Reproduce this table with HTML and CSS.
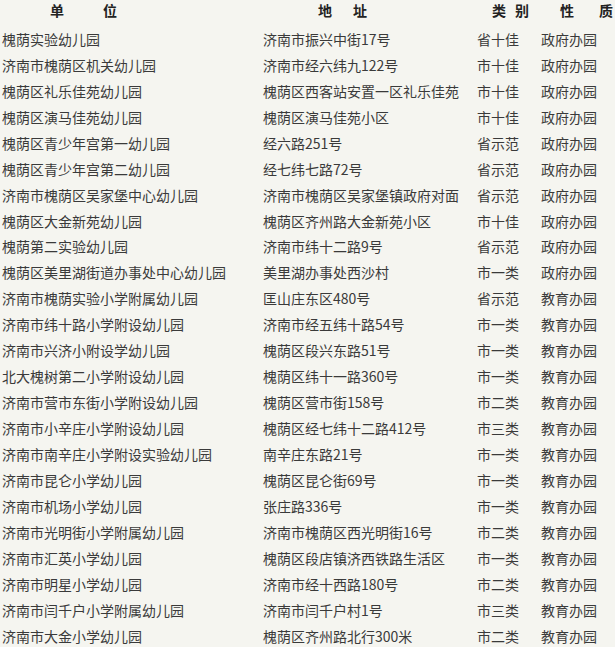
FILE: index.html
```html
<!DOCTYPE html>
<html lang="zh">
<head>
<meta charset="utf-8">
<link rel="stylesheet" href="styles.css">
</head>
<body>
<div class="table">
  <div class="row head">
    <div class="c1"><span class="h h1a">单</span><span class="h h1b">位</span></div>
    <div class="c2"><span class="h h2a">地</span><span class="h h2b">址</span></div>
    <div class="c3"><span class="h h3a">类</span><span class="h h3b">别</span></div>
    <div class="c4"><span class="h h4a">性</span><span class="h h4b">质</span></div>
  </div>
  <div class="row"><div class="c1">槐荫实验幼儿园</div><div class="c2">济南市振兴中街17号</div><div class="c3">省十佳</div><div class="c4">政府办园</div></div>
  <div class="row"><div class="c1">济南市槐荫区机关幼儿园</div><div class="c2">济南市经六纬九122号</div><div class="c3">市十佳</div><div class="c4">政府办园</div></div>
  <div class="row"><div class="c1">槐荫区礼乐佳苑幼儿园</div><div class="c2">槐荫区西客站安置一区礼乐佳苑</div><div class="c3">市十佳</div><div class="c4">政府办园</div></div>
  <div class="row"><div class="c1">槐荫区演马佳苑幼儿园</div><div class="c2">槐荫区演马佳苑小区</div><div class="c3">市十佳</div><div class="c4">政府办园</div></div>
  <div class="row"><div class="c1">槐荫区青少年宫第一幼儿园</div><div class="c2">经六路251号</div><div class="c3">省示范</div><div class="c4">政府办园</div></div>
  <div class="row"><div class="c1">槐荫区青少年宫第二幼儿园</div><div class="c2">经七纬七路72号</div><div class="c3">省示范</div><div class="c4">政府办园</div></div>
  <div class="row"><div class="c1">济南市槐荫区吴家堡中心幼儿园</div><div class="c2">济南市槐荫区吴家堡镇政府对面</div><div class="c3">省示范</div><div class="c4">政府办园</div></div>
  <div class="row"><div class="c1">槐荫区大金新苑幼儿园</div><div class="c2">槐荫区齐州路大金新苑小区</div><div class="c3">市十佳</div><div class="c4">政府办园</div></div>
  <div class="row"><div class="c1">槐荫第二实验幼儿园</div><div class="c2">济南市纬十二路9号</div><div class="c3">省示范</div><div class="c4">政府办园</div></div>
  <div class="row"><div class="c1">槐荫区美里湖街道办事处中心幼儿园</div><div class="c2">美里湖办事处西沙村</div><div class="c3">市一类</div><div class="c4">政府办园</div></div>
  <div class="row"><div class="c1">济南市槐荫实验小学附属幼儿园</div><div class="c2">匡山庄东区480号</div><div class="c3">省示范</div><div class="c4">教育办园</div></div>
  <div class="row"><div class="c1">济南市纬十路小学附设幼儿园</div><div class="c2">济南市经五纬十路54号</div><div class="c3">市一类</div><div class="c4">教育办园</div></div>
  <div class="row"><div class="c1">济南市兴济小附设学幼儿园</div><div class="c2">槐荫区段兴东路51号</div><div class="c3">市一类</div><div class="c4">教育办园</div></div>
  <div class="row"><div class="c1">北大槐树第二小学附设幼儿园</div><div class="c2">槐荫区纬十一路360号</div><div class="c3">市一类</div><div class="c4">教育办园</div></div>
  <div class="row"><div class="c1">济南市营市东街小学附设幼儿园</div><div class="c2">槐荫区营市街158号</div><div class="c3">市二类</div><div class="c4">教育办园</div></div>
  <div class="row"><div class="c1">济南市小辛庄小学附设幼儿园</div><div class="c2">槐荫区经七纬十二路412号</div><div class="c3">市三类</div><div class="c4">教育办园</div></div>
  <div class="row"><div class="c1">济南市南辛庄小学附设实验幼儿园</div><div class="c2">南辛庄东路21号</div><div class="c3">市一类</div><div class="c4">教育办园</div></div>
  <div class="row"><div class="c1">济南市昆仑小学幼儿园</div><div class="c2">槐荫区昆仑街69号</div><div class="c3">市一类</div><div class="c4">教育办园</div></div>
  <div class="row"><div class="c1">济南市机场小学幼儿园</div><div class="c2">张庄路336号</div><div class="c3">市一类</div><div class="c4">教育办园</div></div>
  <div class="row"><div class="c1">济南市光明街小学附属幼儿园</div><div class="c2">济南市槐荫区西光明街16号</div><div class="c3">市二类</div><div class="c4">教育办园</div></div>
  <div class="row"><div class="c1">济南市汇英小学幼儿园</div><div class="c2">槐荫区段店镇济西铁路生活区</div><div class="c3">市一类</div><div class="c4">教育办园</div></div>
  <div class="row"><div class="c1">济南市明星小学幼儿园</div><div class="c2">济南市经十西路180号</div><div class="c3">市二类</div><div class="c4">教育办园</div></div>
  <div class="row"><div class="c1">济南市闫千户小学附属幼儿园</div><div class="c2">济南市闫千户村1号</div><div class="c3">市三类</div><div class="c4">教育办园</div></div>
  <div class="row"><div class="c1">济南市大金小学幼儿园</div><div class="c2">槐荫区齐州路北行300米</div><div class="c3">市二类</div><div class="c4">教育办园</div></div>
</div>
</body>
</html>
```
FILE: styles.css
```css
html, body {
  margin: 0;
  padding: 0;
  background: #f5f5f0;
}
body {
  font-family: "Noto Sans CJK SC", "Liberation Serif", sans-serif;
  font-size: 14px;
  color: #3a3a3a;
  overflow: hidden;
}
.table {
  display: flex;
  flex-direction: column;
  padding-top: 26px;
}
.row {
  display: flex;
  height: 25.95px;
  align-items: center;
  white-space: nowrap;
}
.row.head {
  height: 26px;
  margin-top: -29px;
  margin-bottom: 3px;
  font-weight: bold;
  color: #222;
}
.c1 { width: 261px; padding-left: 2px; box-sizing: border-box; flex: none; }
.c2 { width: 216px; padding-left: 2px; flex: none; box-sizing: border-box; }
.c3 { width: 64px; flex: none; }
.c4 { flex: none; }
.head .c1, .head .c2, .head .c3, .head .c4 { display: flex; }
.h { display: block; }
.h1a { margin-left: 48px; }
.h1b { margin-left: 39px; }
.h2a { margin-left: 55px; }
.h2b { margin-left: 21px; }
.h3a { margin-left: 15px; }
.h3b { margin-left: 9px; }
.h4a { margin-left: 19px; }
.h4b { margin-left: 25px; }
```
